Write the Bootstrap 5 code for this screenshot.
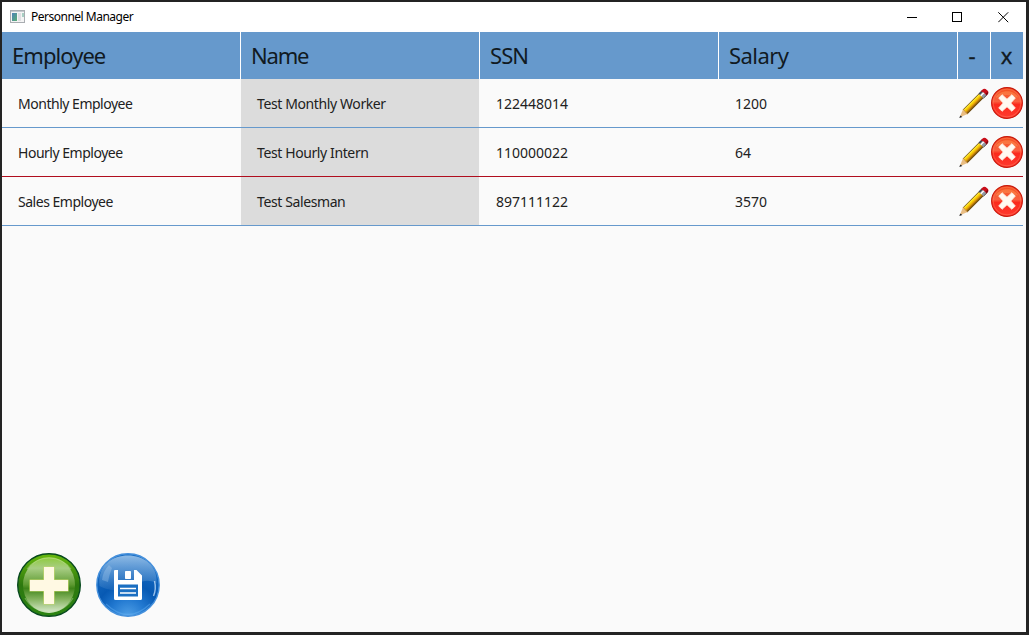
<!DOCTYPE html>
<html lang="en">
<head>
<meta charset="utf-8">
<title>Personnel Manager</title>
<link href="https://cdn.jsdelivr.net/npm/bootstrap@5.3.0/dist/css/bootstrap.min.css" rel="stylesheet">
<style>
  body { background: #232323; font-family: "Noto Sans", "Open Sans", sans-serif; color: #212121; }
  .window { height: 635px; padding: 2px 3px 3px 2px; }
  .title-bar { height: 30px; font-size: 12px; color: #000; background: #fff; padding-left: 8px; }
  .app-icon { margin-top: -2px; }
  .win-title { margin-left: 6px; letter-spacing: -.5px; line-height: 16px; }
  .win-btn { width: 45.5px; height: 28px; }
  .client { background: #fafafa; }
  .staff { width: 1021px; }
  .staff-row { display: grid; grid-template-columns: repeat(4, 239px) 33px 32px; }
  .head { height: 47px; background: #fff; font-size: 22px; line-height: 47px; color: #111a22; letter-spacing: -.95px; }
  .head > div { background: #6699cc; margin-right: 1px; padding-left: 10px; height: 47px; }
  .head > div:last-child { margin-right: 0; }
  .head > .tool { padding: 0 5px 0 0; text-align: center; -webkit-text-stroke: .3px #111a22; }
  .head > .tool:last-child { padding-right: 2px; }
  .head > .tighter { letter-spacing: -1.2px; }
  .head > .looser { letter-spacing: -.55px; }
  .entry { height: 49px; border-bottom: 1px solid #6699cc; font-size: 14px; line-height: 48px; letter-spacing: -.48px; }
  .entry.picked { border-bottom-color: #b00d1e; }
  .entry > div { padding: 1px 0 0 16px; height: 48px; }
  .entry > .digits { letter-spacing: 0; }
  .entry > .tool { padding: 8px 0 0; line-height: 0; }
  .person { background: #dcdcdc; margin-right: 1px; letter-spacing: -.39px; }
  .entry > .tool svg { width: 32px; height: 32px; }
  .actions { padding: 0 0 15px 15px; gap: 15px; }
  .actions svg { width: 64px; height: 64px; }
  .plain { border: 0; padding: 0; background: none; line-height: 0; }
</style>
<script src="https://cdn.jsdelivr.net/npm/bootstrap@5.3.0/dist/js/bootstrap.bundle.min.js"></script>
</head>
<body class="overflow-hidden">
<svg width="0" height="0" class="position-absolute">
  <defs>
    <linearGradient id="redFill" x1="0" y1="0" x2="0" y2="1">
      <stop offset="0" stop-color="#f4501c"/><stop offset=".45" stop-color="#f96040"/><stop offset=".55" stop-color="#fb2a1c"/><stop offset="1" stop-color="#ff3a30"/>
    </linearGradient>
    <linearGradient id="wood" gradientUnits="userSpaceOnUse" x1="11.5" y1="13.5" x2="17" y2="19">
      <stop offset="0" stop-color="#57450e"/><stop offset=".26" stop-color="#7d6010"/><stop offset=".34" stop-color="#ffe738"/><stop offset=".55" stop-color="#f8cc00"/><stop offset=".72" stop-color="#e0980c"/><stop offset="1" stop-color="#6a4608"/>
    </linearGradient>
    <linearGradient id="greenFill" x1="0" y1="0" x2="0" y2="1">
      <stop offset="0" stop-color="#8ecb3c"/><stop offset=".2" stop-color="#a8cd84"/><stop offset=".49" stop-color="#5f9b32"/><stop offset=".56" stop-color="#3f8419"/><stop offset=".75" stop-color="#84b35e"/><stop offset="1" stop-color="#dcebd2"/>
    </linearGradient>
    <linearGradient id="greenRim" x1="0" y1="0" x2="0" y2="1">
      <stop offset="0" stop-color="#67b90d"/><stop offset=".5" stop-color="#2d780f"/><stop offset="1" stop-color="#2b8411"/>
    </linearGradient>
    <radialGradient id="blueFill" cx=".5" cy="1" r=".95">
      <stop offset="0" stop-color="#4f9fe6"/><stop offset=".3" stop-color="#2178d0"/><stop offset=".55" stop-color="#0759b3"/><stop offset="1" stop-color="#1b6fc5"/>
    </radialGradient>
    <linearGradient id="blueShine" x1="0" y1="0" x2="0" y2="1">
      <stop offset="0" stop-color="#b4d3f0" stop-opacity=".75"/><stop offset="1" stop-color="#75a8da" stop-opacity=".15"/>
    </linearGradient>
  </defs>
  <symbol id="pencil" viewBox="0 0 32 32">
    <path d="M1.8 30.2 4.9 22.6 9.6 27Z" fill="#e9bd83"/>
    <path d="M4.9 22.6 20.8 6.4 25.6 11 9.6 27Z" fill="url(#wood)"/>
    <path d="M4.9 22.6 6.5 23.2 7.3 25.2 9.6 27" fill="none" stroke="#c68c3b" stroke-width=".8"/>
    <path d="M20.6 6.5 23.7 3.4 28.8 8 25.5 11.2Z" fill="#9299a2"/>
    <path d="M20.6 6.5 23.7 3.4 24.9 4.6 21.8 7.7Z" fill="#40464e"/>
    <path d="M22.8 8.7 26 5.5" stroke="#fff" stroke-width="1.4"/>
    <path d="M25.5 11.2 28.8 8" stroke="#4e4e52"/>
    <path d="M22.8 4.2 24.6 2.4Q25.8 1.1 27.6 2L30 4Q31.1 5.5 29.8 7L28.5 8.6Q26.5 5 22.8 4.2Z" fill="#c90e1a"/>
    <path d="M28.5 8.6 30.2 6.7 29.8 4.8 27.7 6.6Z" fill="#7f0711"/>
    <path d="M1.3 31 2.3 28.4 4.4 30Z" fill="#222"/>
  </symbol>
  <symbol id="remove" viewBox="0 0 32 32">
    <circle cx="16" cy="16" r="15.4" fill="url(#redFill)" stroke="#c8180c" stroke-width="1.1"/>
    <circle cx="16" cy="16" r="13.9" fill="none" stroke="#ff8062" stroke-width=".8" opacity=".6"/>
    <path d="M4.5 11C8 2 24 2 27.5 11Q16 5 4.5 11Z" fill="#ff9b58" opacity=".45"/>
    <path d="M11.1 7.7 16 12.2 20.9 7.7 24.3 11.1 19.8 16 24.3 20.9 20.9 24.3 16 19.8 11.1 24.3 7.7 20.9 12.2 16 7.7 11.1Z" fill="#fffaf1" stroke="#fff4e8" stroke-width=".8" stroke-linejoin="round"/>
  </symbol>
</svg>

<div class="window d-flex flex-column">
  <header class="title-bar d-flex align-items-center flex-shrink-0">
    <svg class="app-icon" width="15" height="13" viewBox="0 0 15 13">
      <rect x=".5" y=".5" width="14" height="12" fill="#f4f4f4" stroke="#a9adb1"/>
      <path d="M1 1.5H14" stroke="#c5c9ce"/>
      <defs><linearGradient id="pane" x1="0" y1="0" x2="1" y2="1"><stop offset="0" stop-color="#4e82b8"/><stop offset="1" stop-color="#59ae73"/></linearGradient></defs>
      <rect x="2" y="3" width="5" height="8" fill="url(#pane)"/>
      <path d="M8 3H11V11H8Z" fill="#dfdfe2"/><path d="M12 3H14V7H12Z" fill="#a8cfc3"/>
    </svg>
    <span class="win-title">Personnel Manager</span>
    <div class="ms-auto d-flex">
      <button class="plain win-btn" aria-label="Minimize"><svg width="11" height="11"><path d="M0 5.5H10" stroke="#000" shape-rendering="crispEdges"/></svg></button>
      <button class="plain win-btn" aria-label="Maximize"><svg width="11" height="11"><path d="M.5 .5H9.5V9.5H.5Z" fill="none" stroke="#000" shape-rendering="crispEdges"/></svg></button>
      <button class="plain win-btn" aria-label="Close"><svg width="11" height="11"><path d="M.3 .3 10.2 10.2M10.2 .3 .3 10.2" stroke="#000"/></svg></button>
    </div>
  </header>

  <main class="client flex-grow-1 d-flex flex-column">
    <section class="staff">
      <div class="staff-row head">
        <div>Employee</div><div class="tighter">Name</div><div>SSN</div><div class="looser">Salary</div><div class="tool">-</div><div class="tool">x</div>
      </div>
      <div class="staff-row entry">
        <div>Monthly Employee</div><div class="person">Test Monthly Worker</div><div class="digits">122448014</div><div class="digits">1200</div>
        <div class="tool"><svg><use href="#pencil"/></svg></div><div class="tool"><svg><use href="#remove"/></svg></div>
      </div>
      <div class="staff-row entry picked">
        <div>Hourly Employee</div><div class="person">Test Hourly Intern</div><div class="digits">110000022</div><div class="digits">64</div>
        <div class="tool"><svg><use href="#pencil"/></svg></div><div class="tool"><svg><use href="#remove"/></svg></div>
      </div>
      <div class="staff-row entry">
        <div>Sales Employee</div><div class="person">Test Salesman</div><div class="digits">897111122</div><div class="digits">3570</div>
        <div class="tool"><svg><use href="#pencil"/></svg></div><div class="tool"><svg><use href="#remove"/></svg></div>
      </div>
    </section>

    <footer class="actions d-flex mt-auto">
      <button class="plain" aria-label="Add employee">
        <svg viewBox="0 0 64 64">
          <circle cx="32" cy="32" r="31.3" fill="url(#greenRim)" stroke="#07491e" stroke-width="1.4"/>
          <ellipse cx="32" cy="32" rx="26" ry="28" fill="url(#greenFill)"/>
          <path d="M10 16A27.5 27.5 0 0 1 54 16" fill="none" stroke="#d3ecac" stroke-width="1.2" opacity=".4"/>
          <path d="M8 45A27.5 27.5 0 0 0 56 45" fill="none" stroke="#b9dd9c" stroke-width="1.2" opacity=".45"/>
          <path d="M27 14H37V27H51V38H37V51H27V38H13V27H27Z" fill="#fff9e3" stroke="#c5d86c" stroke-width="1.2" stroke-linejoin="round" paint-order="stroke"/>
        </svg>
      </button>
      <button class="plain" aria-label="Save">
        <svg viewBox="0 0 64 64">
          <circle cx="32" cy="32" r="31.2" fill="url(#blueFill)" stroke="#4590dc" stroke-width="1.4"/>
          <path d="M3.5 33C1 12 17 2.5 32 2.5S62 12 60.5 30C54 27 48 27 40 31S17 41 3.5 33Z" fill="url(#blueShine)"/>
          <path d="M6 27Q7 18 13 12L16 15Q13 22 12 29Z" fill="#b8d8f3" opacity=".3"/>
          <path d="M58.5 28Q60.5 36 57.5 43" fill="none" stroke="#d4eaff" stroke-width="1.4" opacity=".7"/>
          <path d="M10 51Q32 72 54 51" fill="none" stroke="#6db7f4" stroke-width="1.2" opacity=".4"/>
          <path d="M19 17H22V27H38V17H40.5L46 22.5V45.5Q46 47 44.5 47H19.5Q18 47 18 45.5V18Q18 17 19 17Z" fill="#fff"/>
          <rect x="29" y="18" width="6" height="8" rx=".7" fill="#fff"/>
          <rect x="22" y="31.5" width="20" height="12" fill="#1b6fc2"/>
          <path d="M24 35.5H40M24 40H40" stroke="#fff" stroke-width="1.3"/>
        </svg>
      </button>
    </footer>
  </main>
</div>
</body>
</html>
